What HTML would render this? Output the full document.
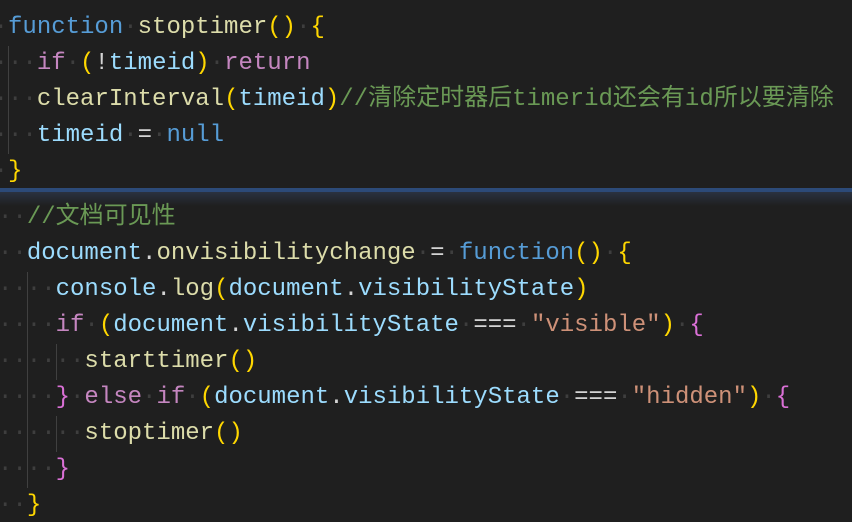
<!DOCTYPE html>
<html><head><meta charset="utf-8"><style>
html,body{margin:0;padding:0;background:#1f1f1f;width:852px;height:522px;overflow:hidden;position:relative}
.l{position:absolute;white-space:pre;font-family:"Liberation Mono","Noto Sans CJK SC",monospace;font-size:24px;line-height:36px;height:36px;color:#d4d4d4}
.k{color:#569cd6}.f{color:#dcdcaa}.y{color:#ffd700}.p{color:#c586c0}.v{color:#9cdcfe}.c{color:#6a9955}.s{color:#ce9178}.m{color:#da70d6}
.d{color:#3e3e3e}
.g{position:absolute;width:1px;background:#404040}
.sep{position:absolute;left:0;width:852px;top:188px;height:4px;background:#2c4a78}
.sh{position:absolute;left:0;width:852px;top:192px;height:14px;background:linear-gradient(#2a3240,#1f1f1f)}
</style></head><body>
<div class="g" style="left:8px;top:46px;height:108px"></div>
<div class="l" style="left:-6.4px;top:10px"><span class="d">·</span><span class="k">function</span><span class="d">·</span><span class="f">stoptimer</span><span class="y">()</span><span class="d">·</span><span class="y">{</span></div>
<div class="l" style="left:-6.4px;top:46px"><span class="d">··</span><span class="d">·</span><span class="p">if</span><span class="d">·</span><span class="y">(</span>!<span class="v">timeid</span><span class="y">)</span><span class="d">·</span><span class="p">return</span></div>
<div class="l" style="left:-6.4px;top:82px"><span class="d">···</span><span class="f">clearInterval</span><span class="y">(</span><span class="v">timeid</span><span class="y">)</span><span class="c">//清除定时器后timerid还会有id所以要清除</span></div>
<div class="l" style="left:-6.4px;top:118px"><span class="d">···</span><span class="v">timeid</span><span class="d">·</span>=<span class="d">·</span><span class="k">null</span></div>
<div class="l" style="left:-6.4px;top:154px"><span class="d">·</span><span class="y">}</span></div>
<div class="sep"></div><div class="sh"></div>
<div class="g" style="left:27px;top:272px;height:216px"></div>
<div class="g" style="left:56px;top:344px;height:36px"></div>
<div class="g" style="left:56px;top:416px;height:36px"></div>
<div class="l" style="left:-2px;top:200px"><span class="d">··</span><span class="c">//文档可见性</span></div>
<div class="l" style="left:-2px;top:236px"><span class="d">··</span><span class="v">document</span>.<span class="f">onvisibilitychange</span><span class="d">·</span>=<span class="d">·</span><span class="k">function</span><span class="y">()</span><span class="d">·</span><span class="y">{</span></div>
<div class="l" style="left:-2px;top:272px"><span class="d">····</span><span class="v">console</span>.<span class="f">log</span><span class="y">(</span><span class="v">document</span>.<span class="v">visibilityState</span><span class="y">)</span></div>
<div class="l" style="left:-2px;top:308px"><span class="d">····</span><span class="p">if</span><span class="d">·</span><span class="y">(</span><span class="v">document</span>.<span class="v">visibilityState</span><span class="d">·</span>===<span class="d">·</span><span class="s">"visible"</span><span class="y">)</span><span class="d">·</span><span class="m">{</span></div>
<div class="l" style="left:-2px;top:344px"><span class="d">······</span><span class="f">starttimer</span><span class="y">()</span></div>
<div class="l" style="left:-2px;top:380px"><span class="d">····</span><span class="m">}</span><span class="d">·</span><span class="p">else</span><span class="d">·</span><span class="p">if</span><span class="d">·</span><span class="y">(</span><span class="v">document</span>.<span class="v">visibilityState</span><span class="d">·</span>===<span class="d">·</span><span class="s">"hidden"</span><span class="y">)</span><span class="d">·</span><span class="m">{</span></div>
<div class="l" style="left:-2px;top:416px"><span class="d">······</span><span class="f">stoptimer</span><span class="y">()</span></div>
<div class="l" style="left:-2px;top:452px"><span class="d">····</span><span class="m">}</span></div>
<div class="l" style="left:-2px;top:488px"><span class="d">··</span><span class="y">}</span></div>
</body></html>
